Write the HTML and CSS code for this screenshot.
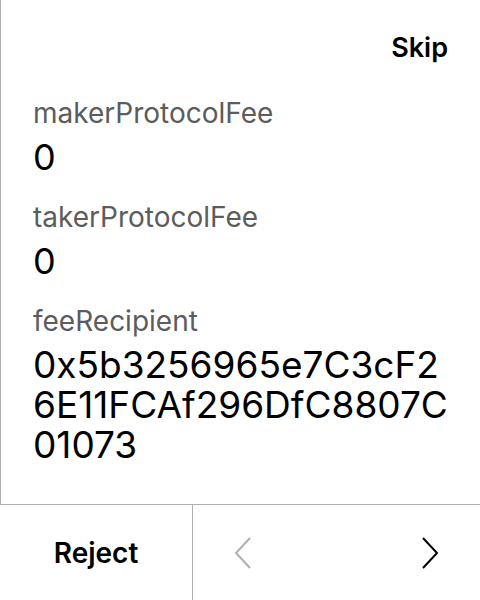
FILE: index.html
```html
<!DOCTYPE html>
<html>
<head>
<meta charset="utf-8">
<link rel="stylesheet" href="styles.css">
</head>
<body>
<div class="screen">
  <div class="content">
    <div class="header"><span class="skip">Skip</span></div>
    <div class="fields">
      <div class="field">
        <div class="label">makerProtocolFee</div>
        <div class="value">0</div>
      </div>
      <div class="field">
        <div class="label">takerProtocolFee</div>
        <div class="value">0</div>
      </div>
      <div class="field">
        <div class="label">feeRecipient</div>
        <div class="value address">0x5b3256965e7C3cF26E11FCAf296DfC8807C01073</div>
      </div>
    </div>
  </div>
  <div class="footer">
    <div class="reject">Reject</div>
    <div class="nav">
      <svg class="chev prev" width="20" height="32" viewBox="0 0 20 32"><path d="M17 1 L3 16 L17 31" fill="none" stroke="currentColor" stroke-width="2"/></svg>
      <svg class="chev next" width="20" height="32" viewBox="0 0 20 32"><path d="M3 1 L17 16 L3 31" fill="none" stroke="currentColor" stroke-width="2"/></svg>
    </div>
  </div>
</div>
</body>
</html>
```
FILE: styles.css
```css
html, body {
  margin: 0;
  padding: 0;
  background: #fff;
}
.screen {
  width: 480px;
  height: 600px;
  display: flex;
  flex-direction: column;
  font-family: Inter, "Noto Sans", sans-serif;
  color: #000;
}
.content {
  flex: 1;
  border-left: 1px solid #b0b0b0;
  padding: 0 28px 0 32px;
  display: flex;
  flex-direction: column;
}
.header {
  display: flex;
  justify-content: flex-end;
  padding-top: 31px;
  padding-right: 4px;
}
.skip {
  font-size: 27px;
  font-weight: 600;
  line-height: 34px;
}
.fields {
  display: flex;
  flex-direction: column;
  gap: 21px;
  margin-top: 31px;
}
.label {
  font-size: 28px;
  color: #5c5c5c;
  line-height: 34px;
}
.value {
  font-size: 36px;
  line-height: 44px;
  margin-top: 5px;
}
.address {
  font-size: 37px;
  word-break: break-all;
  line-height: 40px;
  margin-top: 7px;
}
.footer {
  height: 95px;
  border-top: 1px solid #b0b0b0;
  display: flex;
}
.reject {
  width: 192px;
  border-right: 1px solid #b0b0b0;
  display: flex;
  align-items: center;
  justify-content: center;
  font-size: 28px;
  font-weight: 600;
}
.nav {
  flex: 1;
  display: flex;
  align-items: center;
  justify-content: space-between;
  padding: 0 40px;
}
.chev.prev { color: #b0b0b0; }
.chev.next { color: #000; }
```
